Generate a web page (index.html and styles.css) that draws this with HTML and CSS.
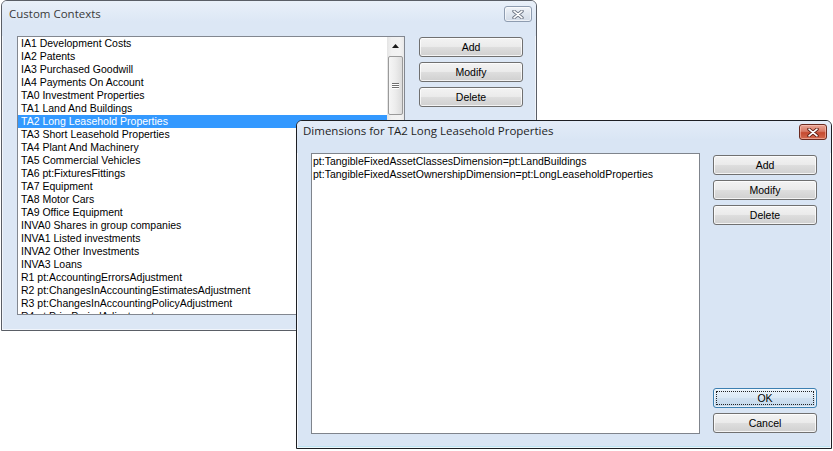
FILE: index.html
```html
<!DOCTYPE html>
<html>
<head>
<meta charset="utf-8">
<title>Custom Contexts</title>
<link rel="stylesheet" href="styles.css">
</head>
<body>
<div class="win win-main">
  <div class="titlebar">
    <span class="title">Custom Contexts</span>
    <span class="close close-inactive">
      <svg width="12" height="9" viewBox="0 0 12 9"><path d="M2 1.2 L10 7.8 M10 1.2 L2 7.8" stroke="#6c7584" stroke-width="3.4" stroke-linecap="round"/><path d="M2 1.2 L10 7.8 M10 1.2 L2 7.8" stroke="#ffffff" stroke-width="1.6" stroke-linecap="round"/></svg>
    </span>
  </div>
  <div class="client">
    <div class="listbox">
      <div class="items">
        <div class="item">IA1 Development Costs</div>
        <div class="item">IA2 Patents</div>
        <div class="item">IA3 Purchased Goodwill</div>
        <div class="item">IA4 Payments On Account</div>
        <div class="item">TA0 Investment Properties</div>
        <div class="item">TA1 Land And Buildings</div>
        <div class="item sel">TA2 Long Leasehold Properties</div>
        <div class="item">TA3 Short Leasehold Properties</div>
        <div class="item">TA4 Plant And Machinery</div>
        <div class="item">TA5 Commercial Vehicles</div>
        <div class="item">TA6 pt:FixturesFittings</div>
        <div class="item">TA7 Equipment</div>
        <div class="item">TA8 Motor Cars</div>
        <div class="item">TA9 Office Equipment</div>
        <div class="item">INVA0 Shares in group companies</div>
        <div class="item">INVA1 Listed investments</div>
        <div class="item">INVA2 Other Investments</div>
        <div class="item">INVA3 Loans</div>
        <div class="item">R1 pt:AccountingErrorsAdjustment</div>
        <div class="item">R2 pt:ChangesInAccountingEstimatesAdjustment</div>
        <div class="item">R3 pt:ChangesInAccountingPolicyAdjustment</div>
        <div class="item">R4 pt:PriorPeriodAdjustment</div>
      </div>
      <div class="vscroll">
        <div class="sb-up">
          <svg width="7" height="4" viewBox="0 0 7 4"><path d="M0 4 L3.5 0 L7 4 Z" fill="#1a1a1a"/></svg>
        </div>
        <div class="thumb">
          <span class="grip"></span><span class="grip"></span><span class="grip"></span>
        </div>
      </div>
    </div>
    <div class="buttons">
      <div class="btn-group">
        <div class="btn">Add</div>
        <div class="btn">Modify</div>
        <div class="btn">Delete</div>
      </div>
    </div>
  </div>
</div>

<div class="win win-dim">
  <div class="titlebar">
    <span class="title">Dimensions for TA2 Long Leasehold Properties</span>
    <span class="close close-active">
      <svg width="12" height="9" viewBox="0 0 12 9"><path d="M2 1.2 L10 7.8 M10 1.2 L2 7.8" stroke="#5b1c12" stroke-width="3.4" stroke-linecap="round"/><path d="M2 1.2 L10 7.8 M10 1.2 L2 7.8" stroke="#ffffff" stroke-width="1.7" stroke-linecap="round"/></svg>
    </span>
  </div>
  <div class="client">
    <div class="listbox">
      <div class="items">
        <div class="item">pt:TangibleFixedAssetClassesDimension=pt:LandBuildings</div>
        <div class="item">pt:TangibleFixedAssetOwnershipDimension=pt:LongLeaseholdProperties</div>
      </div>
    </div>
    <div class="buttons">
      <div class="btn-group">
        <div class="btn">Add</div>
        <div class="btn">Modify</div>
        <div class="btn">Delete</div>
      </div>
      <div class="btn-group bottom">
        <div class="btn btn-default"><span class="focus">OK</span></div>
        <div class="btn">Cancel</div>
      </div>
    </div>
  </div>
</div>
</body>
</html>
```

FILE: styles.css
```css
* { box-sizing: border-box; }
html, body { margin: 0; padding: 0; }
body {
  width: 833px;
  height: 451px;
  overflow: hidden;
  position: relative;
  background: #ffffff;
  font-family: "Liberation Sans", Arial, sans-serif;
  font-size: 10.5px;
  color: #000;
}

.win {
  position: absolute;
  display: flex;
  flex-direction: column;
  background: #dce7f5;
  border: 1px solid #5a5e66;
  border-radius: 6px 6px 0 0;
  box-shadow: inset 0 0 0 1px rgba(255, 255, 255, 0.6);
}
.win-main { left: 1px; top: 0; width: 536px; height: 331px; }
.win-dim {
  left: 296px; top: 120px; width: 536px; height: 329px;
  border-color: #1d1f24;
  background: #d9e5f4;
  box-shadow: inset 0 0 0 1px rgba(255, 255, 255, 0.7), inset 0 -2px 0 #bfe3f2;
}

.titlebar {
  display: flex;
  align-items: flex-start;
  flex: none;
  border-radius: 5px 5px 0 0;
  background: linear-gradient(#e9f0f9, #dce7f5 60%);
}
.win-dim .titlebar { background: linear-gradient(#e3ecf8, #d9e5f4 60%); }
.win-main .titlebar { height: 35px; padding: 5px 4px 0 7px; }
.win-dim .titlebar { height: 32px; padding: 2px 4px 0 6px; }

.title {
  font-family: "Open Sans", "Noto Sans", sans-serif;
  font-size: 11.5px;
  line-height: 16px;
  color: #1e1e1e;
}
.win-main .title { color: #3a3a3a; }

.close {
  margin-left: auto;
  width: 28px;
  height: 16px;
  border-radius: 3px;
  display: flex;
  align-items: center;
  justify-content: center;
}
.close-inactive {
  border: 1px solid #8e9cb0;
  background: linear-gradient(#f1f4f9, #dfe6ef 50%, #d3dce8);
  box-shadow: inset 0 0 0 1px rgba(255, 255, 255, 0.6);
}
.close-active {
  margin-top: 1px;
  border: 1px solid #6b2a1f;
  background: linear-gradient(#e9a596, #d87a66 45%, #c54a30 55%, #d36a4f);
  box-shadow: inset 0 0 0 1px rgba(255, 210, 200, 0.5);
}

.client { display: flex; flex: 1; }
.win-main .client { padding-left: 15px; }
.win-dim .client { padding-left: 14px; padding-bottom: 14px; }

.listbox {
  display: flex;
  background: #ffffff;
  border: 1px solid #828790;
  overflow: hidden;
  flex: none;
}
.win-main .listbox { width: 388px; height: 279px; }
.win-dim .listbox { width: 389px; height: 281px; border-color: #7f848c; }

.items { flex: 1; overflow: hidden; }
.item {
  height: 13px;
  line-height: 13px;
  padding-left: 3px;
  white-space: nowrap;
}
.win-dim .item { padding-left: 1px; }
.win-dim .items { padding-top: 1px; }
.item.sel { background: #3399ff; color: #ffffff; }

.vscroll {
  width: 17px;
  flex: none;
  display: flex;
  flex-direction: column;
  background: linear-gradient(90deg, #e4e4e4, #f1f1f1 25%, #f3f3f3 75%, #e9e9e9);
}
.sb-up {
  height: 17px;
  display: flex;
  align-items: center;
  justify-content: center;
  padding-top: 1px;
}
.thumb {
  margin: 2px 1px 0 1px;
  height: 59px;
  border: 1px solid #9a9a9a;
  border-radius: 2px;
  background: linear-gradient(90deg, #f6f6f6, #ececec 50%, #dcdcdc);
  display: flex;
  flex-direction: column;
  align-items: center;
  justify-content: center;
  gap: 1px;
}
.grip {
  width: 7px;
  height: 1px;
  background: #6f6f6f;
  box-shadow: 0 1px 0 #ffffff;
}

.buttons {
  display: flex;
  flex-direction: column;
  justify-content: space-between;
}
.win-main .buttons { margin-left: 14px; padding-top: 1px; }
.win-dim .buttons { margin-left: 13px; padding-top: 2px; padding-bottom: 1px; }
.btn-group { display: flex; flex-direction: column; gap: 5px; }

.btn {
  width: 104px;
  height: 20px;
  border: 1px solid #707070;
  border-radius: 3px;
  background: linear-gradient(#f3f3f3 0%, #ebebeb 47%, #dddddd 53%, #d0d0d0 100%);
  box-shadow: inset 0 0 0 1px rgba(255, 255, 255, 0.75);
  display: flex;
  align-items: center;
  justify-content: center;
  line-height: 12px;
}
.btn-default {
  border-color: #3c7fb1;
  background: linear-gradient(#eaf3fb 0%, #dce9f5 47%, #cfe0f0 53%, #c3d8ec 100%);
  box-shadow: inset 0 0 0 1px rgba(255, 255, 255, 0.6);
  padding: 2px;
}
.focus {
  flex: 1;
  align-self: stretch;
  display: flex;
  align-items: center;
  justify-content: center;
  border: 1px dotted #222;
}
```
